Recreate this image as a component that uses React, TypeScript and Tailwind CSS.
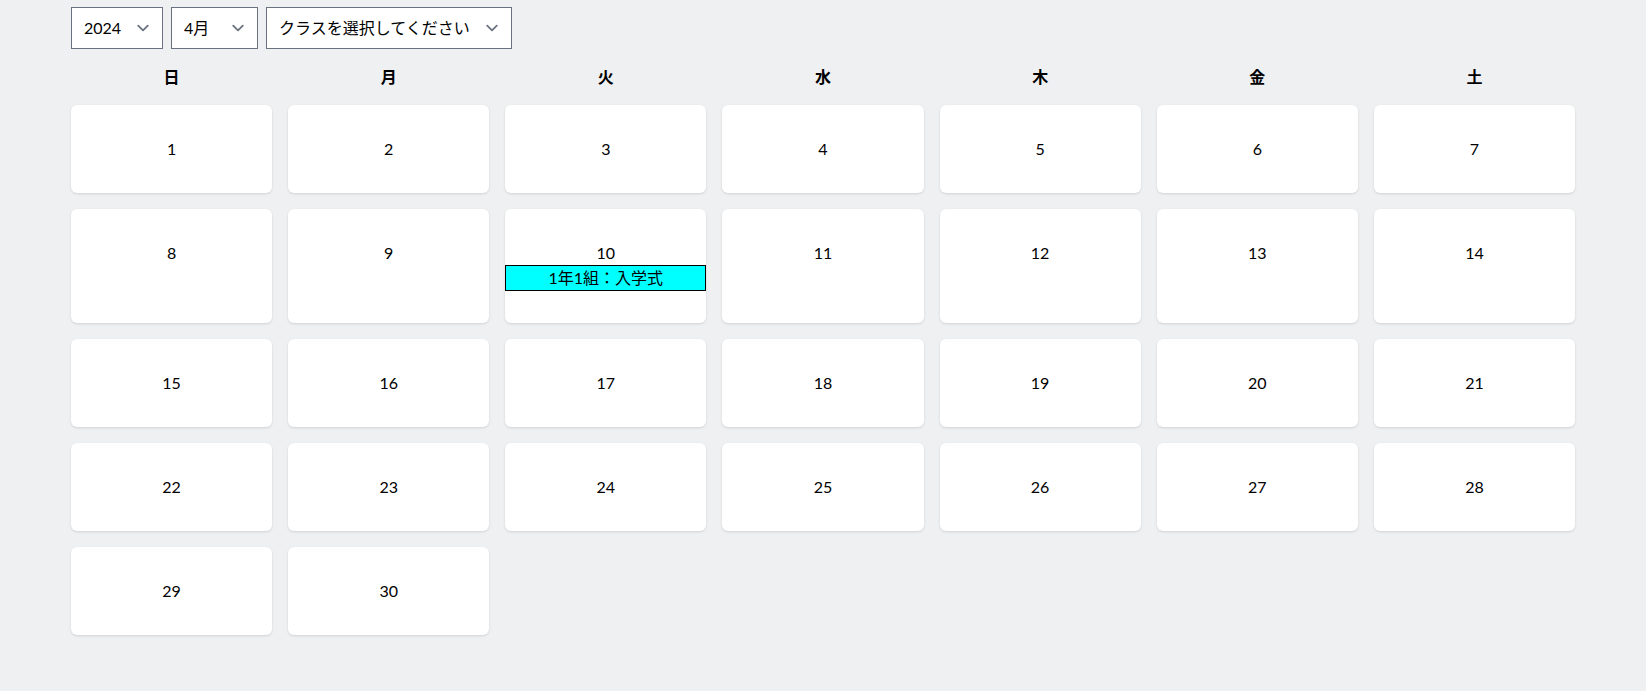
import { useState } from "react";

const weekdays = ["日", "月", "火", "水", "木", "金", "土"];

const events: Record<number, string[]> = {
  10: ["1年1組：入学式"],
};

function Chevron() {
  return (
    <svg
      className="pointer-events-none absolute right-2 top-1/2 h-6 w-6 -translate-y-1/2"
      viewBox="0 0 20 20"
      fill="none"
    >
      <path
        d="M6 8l4 4 4-4"
        stroke="#6b7280"
        strokeWidth="1.5"
        strokeLinecap="round"
        strokeLinejoin="round"
      />
    </svg>
  );
}

export default function App() {
  const [year, setYear] = useState("2024");
  const [month, setMonth] = useState("4");
  const [klass, setKlass] = useState("");

  // 2024年4月は1日が日曜日
  const days = Array.from({ length: 30 }, (_, i) => i + 1);

  return (
    <main
      className="min-h-screen bg-[#eff0f2] px-[71px] pt-[7px] text-black"
      style={{ fontFamily: "Lato, 'Noto Sans CJK JP', sans-serif" }}
    >
      <div className="flex flex-col gap-4">
        <div className="flex gap-2">
          <div className="relative">
            <select
              value={year}
              onChange={(e) => setYear(e.target.value)}
              className="h-[42px] w-[92px] appearance-none rounded-none border border-gray-500 bg-white py-2 pl-3 pr-10 text-base"
            >
              <option value="2023">2023</option>
              <option value="2024">2024</option>
              <option value="2025">2025</option>
            </select>
            <Chevron />
          </div>

          <div className="relative">
            <select
              value={month}
              onChange={(e) => setMonth(e.target.value)}
              className="h-[42px] w-[87px] appearance-none rounded-none border border-gray-500 bg-white py-2 pl-3 pr-10 text-base"
            >
              {Array.from({ length: 12 }, (_, i) => (
                <option key={i} value={String(i + 1)}>
                  {i + 1}月
                </option>
              ))}
            </select>
            <Chevron />
          </div>

          <div className="relative">
            <select
              value={klass}
              onChange={(e) => setKlass(e.target.value)}
              className="h-[42px] w-[246px] appearance-none rounded-none border border-gray-500 bg-white py-2 pl-3 pr-10 text-base"
            >
              <option value="">クラスを選択してください</option>
              <option value="1-1">1年1組</option>
            </select>
            <Chevron />
          </div>
        </div>

        <div className="grid grid-cols-7 gap-4">
          {weekdays.map((w) => (
            <div key={w} className="text-center text-base font-bold leading-6">
              {w}
            </div>
          ))}

          {days.map((d) => (
            <div
              key={d}
              className="rounded-md bg-white py-8 text-center shadow"
            >
              <div className="leading-6">{d}</div>
              {events[d]?.map((ev) => (
                <div
                  key={ev}
                  className="border border-black bg-[#00ffff] leading-6"
                >
                  {ev}
                </div>
              ))}
            </div>
          ))}
        </div>
      </div>
    </main>
  );
}
